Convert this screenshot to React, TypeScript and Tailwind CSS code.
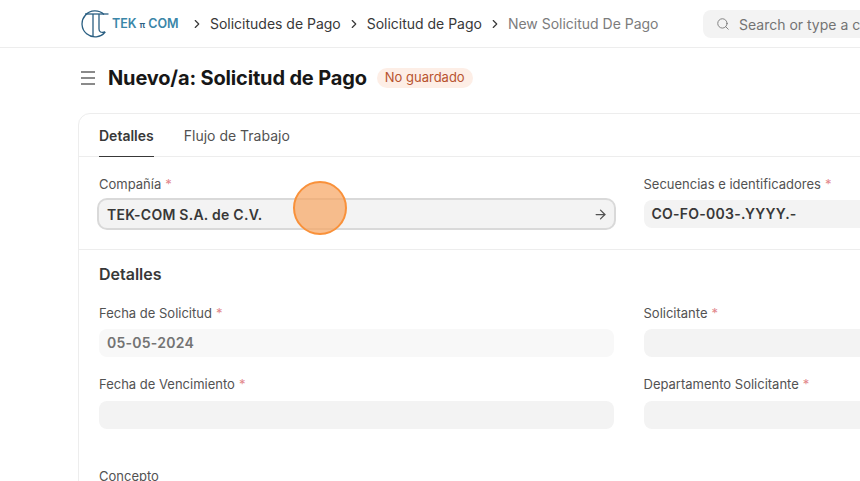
import { ArrowRight, ChevronRight, Search } from "lucide-react";

const crumbs = ["Solicitudes de Pago", "Solicitud de Pago"];

function Logo() {
  return (
    <div className="flex items-center w-[100px] shrink-0">
      <svg width="29" height="28" viewBox="0 0 29 28" fill="none" stroke="#2a5f82" strokeWidth="1.3" className="shrink-0">
        <path d="M24 4.5A13 13 0 1 0 25.2 22" />
        <path d="M5 4H28.5" />
        <path d="M13 4V26.2" />
        <path d="M19 4V19C19 22 21 23 25.2 22" />
      </svg>
      <span className="ml-[3px] mt-[1px] flex items-center text-[12.5px] font-semibold text-[#3a86a8] leading-none font-['Inter',sans-serif]">
        TEK
        <span className="mx-[3px] text-[9px] text-[#2a5f82]">π</span>
        COM
      </span>
    </div>
  );
}

function Field({ label, value, muted = false, low = false }: { label: string; value?: string; muted?: boolean; low?: boolean }) {
  return (
    <div>
      <div className="h-[20px] text-[13px] leading-[20px] text-[#525252]">
        {label}
        <span className="ml-[4px] text-[#e2878b]">*</span>
      </div>
      <div className={`${low ? "mt-[7px]" : "mt-[6px]"} h-[28px] rounded-lg px-[8px] text-[14px] font-semibold leading-[28px] tracking-[0.25px] ${muted ? "bg-[#f8f8f8] text-[#737373]" : "bg-[#f3f3f3] text-[#383838]"}`}>
        {value}
      </div>
    </div>
  );
}

export default function App() {
  return (
    <div className="relative h-[481px] w-[860px] overflow-hidden bg-white font-['Inter',sans-serif]">
      {/* Navbar */}
      <header className="flex h-[48px] items-center border-b border-[#ededed] pl-[80px]">
        <Logo />
        <nav className="ml-[10px] flex items-center text-[14px] tracking-[-0.01px] text-[#383838]">
          {crumbs.map((c) => (
            <span key={c} className="flex items-center">
              <ChevronRight size={14} strokeWidth={2} className="mr-[6px] text-[#383838]" />
              <span className="mr-[6px]">{c}</span>
            </span>
          ))}
          <ChevronRight size={14} strokeWidth={2} className="mr-[6px]" />
          <span className="text-[#7c7c7c]">New Solicitud De Pago</span>
        </nav>
        <div className="absolute left-[703px] top-[10px] flex h-[28px] w-[260px] items-center rounded-lg bg-[#f3f3f3] pl-[13px] text-[14px] text-[#737373]">
          <Search size={14} strokeWidth={1.5} className="mr-[9px] shrink-0" />
          <span className="whitespace-nowrap">Search or type a command</span>
        </div>
      </header>

      {/* Page head */}
      <div className="mb-[6px] flex h-[59px] items-center pl-[81px]">
        <div className="flex w-[14px] flex-col gap-[4px]">
          <span className="h-[2px] bg-[#8a8a8a]" />
          <span className="h-[2px] bg-[#8a8a8a]" />
          <span className="h-[2px] bg-[#8a8a8a]" />
        </div>
        <h1 className="ml-[13px] text-[20px] font-bold leading-none tracking-[-0.16px] text-[#171717]">Nuevo/a: Solicitud de Pago</h1>
        <span className="ml-[10px] flex h-[20px] items-center rounded-full bg-[#fdeee6] px-[8px] text-[13px] text-[#b8532f]">No guardado</span>
      </div>

      {/* Form card */}
      <main className="ml-[78px] w-[1100px] rounded-t-xl border border-[#ededed]">
        <div className="flex h-[43px] gap-[30px] border-b border-[#ededed] pl-[20px] text-[14px]">
          <div className="h-[43px] border-b border-[#383838] pt-[12px] font-semibold leading-[20px] text-[#383838]">Detalles</div>
          <div className="pt-[12px] leading-[20px] text-[#525252]">Flujo de Trabajo</div>
        </div>

        <section className="grid h-[93px] grid-cols-[515px_515px] gap-x-[29.5px] border-b border-[#ededed] pl-[20px] pt-[17px]">
          <div>
            <div className="h-[20px] text-[13px] leading-[20px] text-[#525252]">
              Compañía<span className="ml-[4px] text-[#e2878b]">*</span>
            </div>
            <div className="mt-[6px] flex h-[28px] items-center justify-between rounded-lg bg-[#f3f3f3] pl-[8px] pr-[6px] text-[14px] font-semibold tracking-[0.25px] text-[#383838] ring-2 ring-[#d9d9d9]">
              TEK-COM S.A. de C.V.
              <ArrowRight size={15} strokeWidth={2} className="text-[#525252]" />
            </div>
          </div>
          <Field label="Secuencias e identificadores" value="CO-FO-003-.YYYY.-" />
        </section>

        <section className="pl-[20px] pt-[14px]">
          <h2 className="h-[20px] text-[16px] font-semibold leading-[20px] text-[#383838]">Detalles</h2>
          <div className="mt-[19px] grid grid-cols-[515px_515px] gap-x-[29.5px] gap-y-[17px]">
            <Field label="Fecha de Solicitud" value="05-05-2024" muted />
            <Field label="Solicitante" />
            <Field label="Fecha de Vencimiento" low />
            <Field label="Departamento Solicitante" low />
          </div>
          <div className="mt-[37px] h-[20px] text-[13px] leading-[20px] text-[#525252]">Concepto</div>
        </section>
      </main>

      {/* Click marker */}
      <div className="absolute left-[293px] top-[181px] h-[54px] w-[54px] rounded-full border-2 border-[#f9913a] bg-[#f7a45f]/70" />
    </div>
  );
}
